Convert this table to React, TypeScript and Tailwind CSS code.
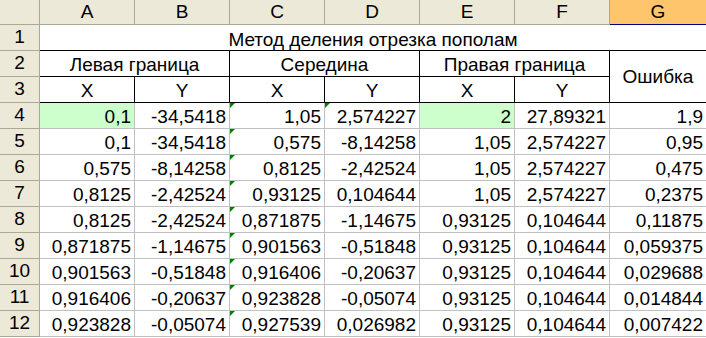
import React from 'react';

const cols = ['A', 'B', 'C', 'D', 'E', 'F', 'G'];

const rows: string[][] = [
  ['0,1', '-34,5418', '1,05', '2,574227', '2', '27,89321', '1,9'],
  ['0,1', '-34,5418', '0,575', '-8,14258', '1,05', '2,574227', '0,95'],
  ['0,575', '-8,14258', '0,8125', '-2,42524', '1,05', '2,574227', '0,475'],
  ['0,8125', '-2,42524', '0,93125', '0,104644', '1,05', '2,574227', '0,2375'],
  ['0,8125', '-2,42524', '0,871875', '-1,14675', '0,93125', '0,104644', '0,11875'],
  ['0,871875', '-1,14675', '0,901563', '-0,51848', '0,93125', '0,104644', '0,059375'],
  ['0,901563', '-0,51848', '0,916406', '-0,20637', '0,93125', '0,104644', '0,029688'],
  ['0,916406', '-0,20637', '0,923828', '-0,05074', '0,93125', '0,104644', '0,014844'],
  ['0,923828', '-0,05074', '0,927539', '0,026982', '0,93125', '0,104644', '0,007422'],
];

function Flag() {
  return (
    <span className="absolute left-0 top-0 h-0 w-0 border-r-[5px] border-t-[5px] border-r-transparent border-t-[#008000]" />
  );
}

function RowHead({ n }: { n: number }) {
  return (
    <div className="flex items-center justify-center border-b border-r border-[#aca899] bg-[#ece9d8]">{n}</div>
  );
}

export default function App() {
  return (
    <div
      className="grid h-[338px] w-[706px] grid-cols-[40px_95px_95px_95px_95px_95px_95px_96px] grid-rows-[25px_repeat(12,26px)] overflow-hidden bg-white text-[19px] text-black"
      style={{ fontFamily: '"Liberation Sans", Arial, sans-serif' }}
    >
      {/* column headers */}
      <div className="border-b border-r border-[#aca899] bg-[#ece9d8]" />
      {cols.map((c) =>
        c === 'G' ? (
          <div key={c} className="flex items-center justify-center border-b border-b-[#000080] bg-[#ffc56c]">
            {c}
          </div>
        ) : (
          <div key={c} className="flex items-center justify-center border-b border-r border-[#aca899] bg-[#ece9d8]">
            {c}
          </div>
        )
      )}

      {/* row 1 */}
      <RowHead n={1} />
      <div className="col-span-7 flex items-end justify-center border-b border-black pb-[1px] leading-none">
        Метод деления отрезка пополам
      </div>

      {/* row 2 */}
      <RowHead n={2} />
      <div className="col-span-2 flex items-end justify-center border-b border-r border-black pb-[2px] leading-none">Левая граница</div>
      <div className="col-span-2 flex items-end justify-center border-b border-r border-black pb-[2px] leading-none">Середина</div>
      <div className="col-span-2 flex items-end justify-center border-b border-r border-black pb-[2px] leading-none">Правая граница</div>
      <div className="row-span-2 flex items-center justify-center border-b border-black leading-none">Ошибка</div>

      {/* row 3 */}
      <RowHead n={3} />
      {['X', 'Y', 'X', 'Y', 'X', 'Y'].map((t, i) => (
        <div key={i} className="flex items-end justify-center border-b border-r border-black pb-[2px] leading-none">
          {t}
        </div>
      ))}

      {/* data rows */}
      {rows.map((r, ri) => (
        <React.Fragment key={ri}>
          <RowHead n={ri + 4} />
          {r.map((v, ci) => (
            <div
              key={ci}
              className={`relative flex items-end justify-end border-b border-[#c0c0c0] pb-[2px] pr-[3px] leading-none ${ci < 6 ? 'border-r' : ''} ${ri === 0 && (ci === 0 || ci === 4) ? 'bg-[#ccffcc]' : ''}`}
            >
              {(ci === 2 || (ri === 0 && ci === 3)) && <Flag />}
              {v}
            </div>
          ))}
        </React.Fragment>
      ))}
    </div>
  );
}
